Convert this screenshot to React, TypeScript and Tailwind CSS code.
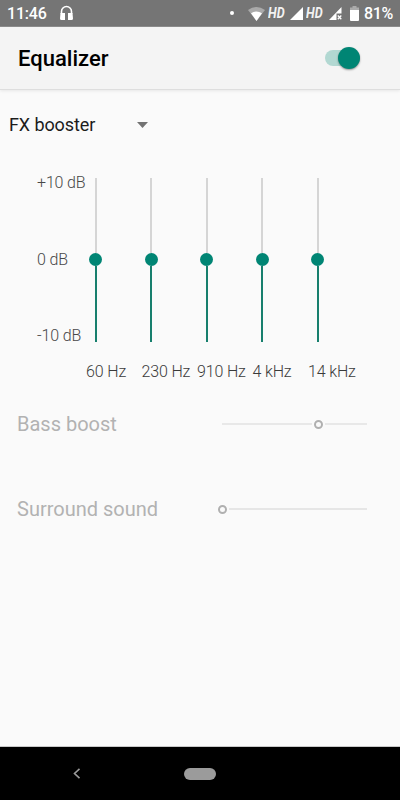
import React from "react";

const bands = ["60 Hz", "230 Hz", "910 Hz", "4 kHz", "14 kHz"];

function Hd() {
  return (
    <span className="ml-[3px] w-[18px] origin-left scale-x-[0.9] text-[14px] leading-none font-bold text-[#f2f2f2] italic">
      HD
    </span>
  );
}

function StatusBar() {
  return (
    <header className="flex h-[27px] shrink-0 items-center border-b border-[#8d8d8d] bg-[#757575] text-white">
      <span className="mt-[2px] ml-[7px] w-[52px] text-[16px] leading-none font-medium tracking-[-0.2px]">11:46</span>
      <svg className="h-[16px] w-[15px]" viewBox="0 0 15 16" fill="none">
        <path d="M2.500 9V6.500a5 5 0 0 1 10 0V9" stroke="white" strokeWidth="1.6" />
        <path d="M1.500 8H6V15H2.500Q1 15 1 13.500ZM13.500 8H9V15H12.500Q14 15 14 13.500Z" fill="white" />
      </svg>
      <i className="ml-[156px] size-[4px] rounded-full bg-white" />
      <svg className="mt-[1px] ml-[14px] h-[14px] w-[17px]" viewBox="0 0 17 14">
        <path d="M0 3Q8.500 -3 17 3L8.500 14Z" fill="#a9a9a9" />
        <path d="M3 6.200Q8.500 2.800 14 6.200L8.500 14Z" fill="white" />
      </svg>
      <Hd />
      <svg className="mt-[1px] ml-[4px] h-[13px] w-[13px]" viewBox="0 0 13 13">
        <path d="M13 0V13H0Z" fill="white" />
      </svg>
      <Hd />
      <svg className="mt-[1px] ml-[5px] h-[13px] w-[13px]" viewBox="0 0 13 13">
        <path d="M12.500 0V6.500H7.500V13H0Z" fill="white" />
        <path d="M8.800 8.500L12.300 12.300M12.300 8.500L8.800 12.300" stroke="white" strokeWidth="1.300" />
      </svg>
      <svg className="ml-[8px] h-[15px] w-[9px]" viewBox="0 0 9 15">
        <path d="M2.500 0H6.500V1.500H9V4H0V1.500H2.500Z" fill="#aaa" />
        <path d="M0 4H9V14Q9 15 8 15H1Q0 15 0 14Z" fill="white" />
      </svg>
      <span className="mt-[2px] ml-[5px] text-[16px] leading-none font-medium tracking-[-0.4px]">81%</span>
    </header>
  );
}

function AppBar() {
  return (
    <div className="flex h-[63px] shrink-0 items-center justify-between border-b border-[#dedede] bg-[#f4f4f4] pr-[40px] pl-[18px] shadow-[0_1px_3px_rgba(0,0,0,0.08)]">
      <h1 className="mt-[2px] text-[22px] leading-none font-medium text-black">Equalizer</h1>
      <div className="flex h-[16px] w-[35px] items-center justify-end rounded-full bg-[#b2d8d2]">
        <div className="size-[22px] shrink-0 rounded-full bg-[#008574] shadow-[0_1px_2px_rgba(0,0,0,0.4)]" />
      </div>
    </div>
  );
}

function Band() {
  return (
    <div className="flex w-[55.5px] shrink-0 flex-col items-center">
      <div className="h-[75px] w-[2px] bg-[#d5d5d5]" />
      <div className="size-[13px] rounded-full bg-[#008574]" />
      <div className="h-[76px] w-[2px] bg-[#177f6d]" />
    </div>
  );
}

function Knob() {
  return <div className="size-[9px] shrink-0 rounded-full border-2 border-[#b0b0b0]" />;
}

export default function App() {
  return (
    <div className="flex h-[800px] w-[400px] flex-col overflow-hidden bg-[#fafafa] font-[Roboto,sans-serif]">
      <StatusBar />
      <AppBar />
      <main className="flex flex-1 flex-col">
        <div className="mt-[25px] flex h-[20px] items-center pl-[9px]">
          <span className="w-[128px] text-[18px] leading-none tracking-[-0.1px] text-[#1c1c1c]">FX booster</span>
          <svg className="h-[6px] w-[11px]" viewBox="0 0 11 6">
            <path d="M0 0H11L5.500 6Z" fill="#737373" />
          </svg>
        </div>
        <section className="mt-[43px] flex h-[164px]">
          <div className="-mt-[4px] flex h-[170px] w-[68px] flex-col justify-between pl-[37px] text-[16px] leading-[17px] font-light tracking-[-0.15px] whitespace-nowrap text-[#484848]">
            <span>+10 dB</span>
            <span>0 dB</span>
            <span>-10 dB</span>
          </div>
          {bands.map((band) => (
            <Band key={band} />
          ))}
        </section>
        <div className="mt-[21px] flex h-[18px] items-center pl-[86px] text-[16px] leading-none font-light tracking-[-0.15px] whitespace-nowrap text-[#3a3a3a]">
          {bands.map((band) => (
            <span key={band} className="w-[55.5px] shrink-0">{band}</span>
          ))}
        </div>
        <div className="mt-[33px] flex h-[20px] items-center pl-[17px] text-[#b2b2b2]">
          <span className="w-[205px] text-[20px] leading-none">Bass boost</span>
          <div className="h-[2px] w-[90px] bg-[#e8e8e8]" />
          <div className="mx-[2px]"><Knob /></div>
          <div className="h-[2px] w-[42px] bg-[#e8e8e8]" />
        </div>
        <div className="mt-[65px] flex h-[20px] items-center pl-[17px] text-[#b2b2b2]">
          <span className="w-[201px] text-[20px] leading-none">Surround sound</span>
          <Knob />
          <div className="ml-[2px] h-[2px] w-[138px] bg-[#e6e6e6]" />
        </div>
      </main>
      <nav className="flex h-[54px] shrink-0 items-center border-t border-[#c8c8c8] bg-black">
        <svg className="ml-[73px] h-[11px] w-[8px]" viewBox="0 0 8 11" fill="none">
          <path d="M6.500 0.800L1.500 5.500L6.500 10.200" stroke="#999" strokeWidth="1.600" />
        </svg>
        <div className="ml-[103px] h-[12px] w-[32px] rounded-full bg-[#9b9b9b]" />
      </nav>
    </div>
  );
}
